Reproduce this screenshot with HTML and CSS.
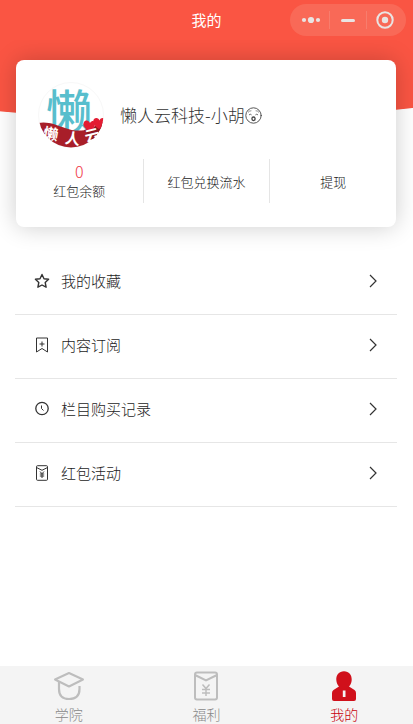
FILE: index.html
```html
<!DOCTYPE html>
<html lang="zh-CN">
<head>
<meta charset="utf-8">
<meta name="viewport" content="width=device-width, initial-scale=1">
<title>我的</title>
<link rel="stylesheet" href="styles.css">
</head>
<body>
<header class="topbar">
  <h1 class="topbar-title">我的</h1>
  <div class="capsule">
    <button class="capsule-btn" type="button" aria-label="更多">
      <svg width="20" height="20" viewBox="0 0 20 20" fill="#e9e4e3"><circle cx="3" cy="10" r="2.1"/><circle cx="10" cy="10" r="3.1"/><circle cx="17" cy="10" r="2.1"/></svg>
    </button>
    <button class="capsule-btn" type="button" aria-label="最小化">
      <svg width="20" height="20" viewBox="0 0 20 20"><path d="M4.500 10.500h11" stroke="#e9e4e3" stroke-width="3" stroke-linecap="round"/></svg>
    </button>
    <button class="capsule-btn" type="button" aria-label="关闭">
      <svg width="20" height="20" viewBox="0 0 20 20"><circle cx="10" cy="10" r="7.700" fill="none" stroke="#e9e4e3" stroke-width="2"/><circle cx="10" cy="10" r="3.200" fill="#e9e4e3"/></svg>
    </button>
  </div>
</header>

<main class="content">
  <section class="card">
    <div class="profile">
      <svg class="avatar" viewBox="0 0 66 66" role="img" aria-label="头像">
        <defs><clipPath id="round"><circle cx="33" cy="33" r="32.500"/></clipPath></defs>
        <circle cx="33" cy="33" r="32.500" fill="#fff" stroke="#f8f8f8"/>
        <text class="logo-char" x="8" y="46">懒</text>
        <g clip-path="url(#round)">
          <path d="M0 41C10 39 18 43 27 46C38 50 49 50 66 41V66H0Z" fill="#a81e29"/>
          <path d="M46 48Q56 47 63 39L66 41V58L55 60Z" fill="#8f1722"/>
          <path d="M52 50C47 47 44 43 46 40C48 37.500 51 38.500 52 41C54 38 57 38.500 57 42C57 45 55 48 52 50Z" fill="#e31c32"/>
          <path d="M61 47C56 44 54 40 56 37C58 35 61 36 61.500 38.500C63 35 66 35.500 67 38C67 42 64 45 61 47Z" fill="#e31c32"/>
        </g>
        <g class="logo-script">
          <text x="5" y="57" transform="rotate(10 11 53)">懒</text>
          <text x="27" y="62" transform="rotate(8 34 58)">人</text>
          <text x="47" y="59" transform="rotate(-14 54 55)">云</text>
        </g>
      </svg>
      <h2 class="name">懒人云科技-小胡<svg class="face" viewBox="0 0 17 17" role="img" aria-label="惊讶"><g fill="none" stroke="#444" stroke-linecap="round"><circle cx="8.500" cy="8.500" r="7.700" stroke-width=".9"/><path d="M3.200 5.200Q4.500 3.500 6 3.700M13.800 5.200Q12.500 3.500 11 3.700" stroke-width=".6"/><path d="M4.300 7.600Q5.300 6.600 6.300 7.600M10.700 7.600Q11.700 6.600 12.700 7.600" stroke-width=".8"/><ellipse cx="8.500" cy="11.800" rx="1.600" ry="1.800" stroke-width="1.300"/></g></svg></h2>
    </div>
    <div class="stats">
      <a class="stat" href="#balance"><span class="stat-value">0</span><span>红包余额</span></a>
      <a class="stat" href="#exchange">红包兑换流水</a>
      <a class="stat" href="#withdraw">提现</a>
    </div>
  </section>

  <nav class="menu" aria-label="功能">
    <a class="menu-item" href="#favorites">
      <svg class="menu-icon" viewBox="0 0 16 16"><path d="M8 1.500L10 5.700L14.600 6.300L11.200 9.500L12.100 14.200L8 12L3.900 14.200L4.800 9.500L1.400 6.300L6 5.700Z" stroke-width="1.400"/></svg>
      <span>我的收藏</span>
      <svg class="chevron" viewBox="0 0 8 14"><path d="M1 1L7 7L1 13"/></svg>
    </a>
    <a class="menu-item" href="#subscriptions">
      <svg class="menu-icon" viewBox="0 0 16 16"><path d="M2.500 1V15L8 11.500L13.500 15V1ZM8 4.500V9.500M5.500 7H10.500"/></svg>
      <span>内容订阅</span>
      <svg class="chevron" viewBox="0 0 8 14"><path d="M1 1L7 7L1 13"/></svg>
    </a>
    <a class="menu-item" href="#purchases">
      <svg class="menu-icon" viewBox="0 0 16 16"><circle cx="8" cy="7.500" r="6.200" stroke-width="1.300"/><path d="M7.500 4.500V7.500L9.500 9.500"/></svg>
      <span>栏目购买记录</span>
      <svg class="chevron" viewBox="0 0 8 14"><path d="M1 1L7 7L1 13"/></svg>
    </a>
    <a class="menu-item" href="#activities">
      <svg class="menu-icon" viewBox="0 0 16 16"><rect x="2.500" y=".7" width="11" height="14.600" rx="1"/><path d="M2.500 2.500L8 5.300L13.500 2.500M6 6.500L8 8.700L10 6.500M8 8.700V13M5.800 9H10.200M5.800 11H10.200"/></svg>
      <span>红包活动</span>
      <svg class="chevron" viewBox="0 0 8 14"><path d="M1 1L7 7L1 13"/></svg>
    </a>
  </nav>
</main>

<nav class="tabbar" aria-label="主导航">
  <a class="tab" href="#academy">
    <svg class="tab-icon" viewBox="0 0 32 32" fill="none" stroke="#bdbdbd" stroke-width="2" stroke-linejoin="round"><path d="M2 9.500L16 3L30 9.500L16 16.500Z"/><path d="M6 12V19Q6 29 16 29Q26.500 29 26.500 19V16" stroke-width="2.200"/></svg>
    <span>学院</span>
  </a>
  <a class="tab" href="#welfare">
    <svg class="tab-icon" viewBox="0 0 32 32" fill="none" stroke="#bdbdbd" stroke-width="2"><rect x="5" y="2.500" width="22" height="27" rx="2"/><path d="M5 5L16 10.500L27 5"/><path d="M12.500 14.500L16 18.500L19.500 14.500M16 18.500V26M12 19.500H20M12 23H20" stroke-width="1.500"/></svg>
    <span>福利</span>
  </a>
  <a class="tab tab-active" href="#me" aria-current="page">
    <svg class="tab-icon" viewBox="0 0 32 32"><path d="M16 1.300C11 1.300 8 5 8.300 10C8.500 13 9.500 15 11 16.500L5.500 20Q4 21 4 23V29Q4 31 6 31H26Q28 31 28 29V23Q28 21 26.500 20L21 16.500C22.500 15 23.500 13 23.700 10C24 5 21 1.300 16 1.300Z" fill="#d0101b"/><path d="M14.800 20.500H17.500V27H14.800Z" fill="#f4f4f4"/></svg>
    <span>我的</span>
  </a>
</nav>
</body>
</html>
```
FILE: styles.css
```css
* {
  box-sizing: border-box;
}

body {
  margin: 0;
  min-height: 100vh;
  display: flex;
  flex-direction: column;
  background: #fff;
  color: #1c1c1c;
  font-family: "Noto Sans CJK SC", sans-serif;
  font-weight: 300;
}

a {
  color: inherit;
  text-decoration: none;
}

svg {
  display: block;
  flex: none;
}

.topbar {
  position: sticky;
  top: 0;
  z-index: 2;
  height: 40px;
  display: grid;
  grid-template-columns: 1fr auto 1fr;
  align-items: center;
  padding: 0 7px;
  background: #fa5543;
}

.topbar-title {
  grid-column: 2;
  margin: 0;
  color: #fff;
  font-size: 15px;
  font-weight: 400;
  line-height: 22px;
}

.capsule {
  justify-self: end;
  width: 116px;
  height: 32px;
  display: flex;
  align-items: center;
  padding: 0 3px;
  border-radius: 16px;
  background: #f96957;
}

.capsule-btn {
  flex: 1;
  height: 18px;
  display: flex;
  align-items: center;
  justify-content: center;
  padding: 0;
  border: 0;
  background: none;
}

.capsule-btn + .capsule-btn {
  border-left: 1px solid #f77d6d;
}

.content {
  flex: 1;
  padding: 20px 17px 20px 16px;
  background: radial-gradient(ellipse 430px 80px at 46% 0, #fa5543 99%, transparent 100%) no-repeat;
}

.card {
  padding: 22px 0 24px;
  border-radius: 8px;
  background: #fff;
  box-shadow: 0 0 24px rgba(0, 0, 0, 0.2);
}

.profile {
  display: flex;
  align-items: center;
  gap: 16px;
  padding: 0 22px;
}

.avatar {
  width: 66px;
  height: 66px;
  overflow: visible;
}

.logo-char {
  fill: #58becd;
  font-size: 46px;
  font-weight: 500;
}

.logo-script {
  fill: #fff;
  font-size: 15px;
  font-weight: 700;
}

.name {
  display: flex;
  align-items: center;
  margin: 0;
  color: #333;
  font-size: 17px;
  font-weight: inherit;
  line-height: 24px;
}

.face {
  width: 17px;
  height: 17px;
}

.stats {
  display: grid;
  grid-template-columns: repeat(3, 1fr);
  margin-top: 11px;
}

.stat {
  height: 44px;
  display: flex;
  flex-direction: column;
  align-items: center;
  justify-content: center;
  color: #222;
  font-size: 13px;
  line-height: 19px;
}

.stat + .stat {
  border-left: 1px solid #e5e5e5;
}

.stat-value {
  color: #f03a48;
  font-size: 16px;
}

.menu {
  margin: 24px -1px 0;
}

.menu-item {
  height: 64px;
  display: flex;
  align-items: center;
  gap: 11px;
  padding: 0 20px 3px 19px;
  border-bottom: 1px solid #e6e6e6;
  font-size: 15px;
  line-height: 22px;
}

.menu-icon {
  width: 16px;
  height: 16px;
  fill: none;
  stroke: #333;
  stroke-linejoin: round;
}

.chevron {
  width: 8px;
  height: 14px;
  margin-left: auto;
  fill: none;
  stroke: #333;
  stroke-width: 1.2px;
}

.tabbar {
  position: sticky;
  bottom: 0;
  display: grid;
  grid-template-columns: repeat(3, 1fr);
  background: #f4f4f4;
}

.tab {
  height: 58px;
  display: flex;
  flex-direction: column;
  align-items: center;
  gap: 2px;
  padding-top: 4px;
  color: #888;
  font-size: 14px;
  line-height: 20px;
}

.tab-active {
  color: #c8000c;
}

.tab-icon {
  width: 32px;
  height: 32px;
}
```
